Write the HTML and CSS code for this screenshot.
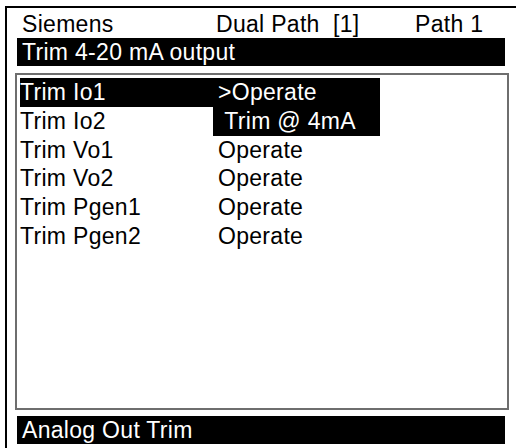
FILE: index.html
```html
<!DOCTYPE html>
<html lang="en">
<head>
    <meta charset="UTF-8">
    <title>Analog Out Trim</title>
    <link rel="stylesheet" href="styles.css">
</head>
<body>
    <div class="frame">
        <div class="top-row">
            <span class="brand">Siemens</span>
            <span class="mode">Dual Path  [1]</span>
            <span class="path">Path 1</span>
        </div>

        <div class="title-bar">Trim 4-20 mA output</div>

        <div class="list-box">
            <div class="row selected">
                <span class="name">Trim Io1</span>
                <span class="value">&gt;Operate</span>
            </div>
            <div class="row">
                <span class="name">Trim Io2</span>
                <span class="value dropdown"> Trim @ 4mA</span>
            </div>
            <div class="row">
                <span class="name">Trim Vo1</span>
                <span class="value">Operate</span>
            </div>
            <div class="row">
                <span class="name">Trim Vo2</span>
                <span class="value">Operate</span>
            </div>
            <div class="row">
                <span class="name">Trim Pgen1</span>
                <span class="value">Operate</span>
            </div>
            <div class="row">
                <span class="name">Trim Pgen2</span>
                <span class="value">Operate</span>
            </div>
        </div>

        <div class="status-bar">Analog Out Trim</div>
    </div>
</body>
</html>
```

FILE: styles.css
```css
body {
    margin: 0;
    background-color: #fff;
    font-family: "Liberation Sans", Arial, sans-serif;
    font-size: 23px;
    letter-spacing: 0.3px;
    color: #000;
    overflow: hidden;
}
.frame {
    margin: 6px 0 0 5px;
    height: 442px;
    border-top: 2px solid #000;
    border-left: 2px solid #000;
    padding-left: 10px;
    box-sizing: border-box;
}
.top-row {
    display: flex;
    height: 29px;
    padding-top: 4px;
    line-height: 25px;
    box-sizing: border-box;
    white-space: pre;
}
.brand {
    width: 194px;
    padding-left: 5px;
}
.mode {
    width: 199px;
}
.title-bar,
.status-bar {
    width: 488px;
    height: 28px;
    line-height: 28px;
    padding-left: 5px;
    box-sizing: border-box;
    background-color: #000;
    color: #fff;
}
.title-bar {
    margin-top: 1px;
}
.list-box {
    width: 494px;
    height: 337px;
    margin: 7px 0 6px -2px;
    padding: 3px 0 0 3px;
    border: 2px solid #6e6e6e;
    box-sizing: border-box;
}
.row {
    display: flex;
    width: 360px;
    height: 28.8px;
    line-height: 28px;
    white-space: pre;
}
.name {
    width: 193px;
}
.value {
    flex: 1;
    padding-left: 5px;
}
.selected,
.dropdown {
    background-color: #000;
    color: #fff;
}
```
